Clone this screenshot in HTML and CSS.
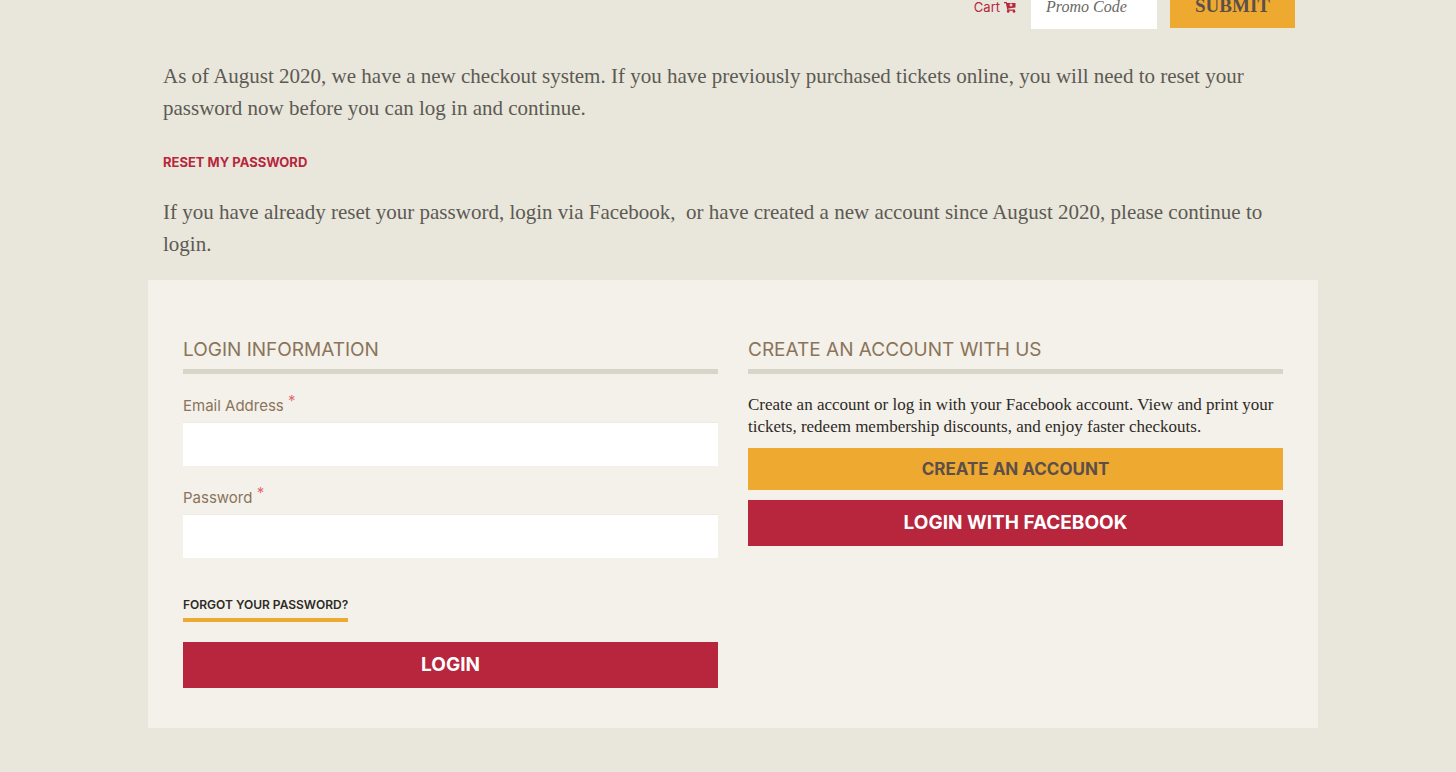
FILE: index.html
```html
<!DOCTYPE html>
<html lang="en">
<head>
<meta charset="utf-8">
<title>Login</title>
<link rel="stylesheet" href="styles.css">
</head>
<body>
<div class="container">
  <header class="toolbar">
    <a class="cart" href="#">Cart
      <svg class="cart-icon" viewBox="0 0 12 12" aria-hidden="true">
        <path d="M0 1h2.700l.3 1H11.500v4.600L4.300 7.500l.2 1H11v1.200H3.500L1.900 2.200H0z" fill="currentColor"/>
        <circle cx="4.200" cy="10.400" r="1.300" fill="currentColor"/>
        <circle cx="10" cy="10.400" r="1.300" fill="currentColor"/>
        <path d="M7 2.500v3M5.500 4h3" stroke="#fff" stroke-width="1"/>
      </svg>
    </a>
    <form class="promo">
      <input class="promo-input" type="text" placeholder="Promo Code" aria-label="Promo Code">
      <button class="promo-submit" type="button">SUBMIT</button>
    </form>
  </header>
  <section class="notice">
    <p class="notice-text">As of August 2020, we have a new checkout system. If you have previously purchased tickets online, you will need to reset your password now before you can log in and continue.</p>
    <a class="reset-link" href="#">RESET MY PASSWORD</a>
    <p class="notice-text">If you have already reset your password, login via Facebook,&nbsp; or have created a new account since August 2020, please continue to login.</p>
  </section>
  <main class="panel">
    <form class="column">
      <h2 class="heading">LOGIN INFORMATION</h2>
      <div class="field">
        <label class="label" for="email">Email Address <span class="required">*</span></label>
        <input class="input" id="email" type="email">
      </div>
      <div class="field">
        <label class="label" for="password">Password <span class="required">*</span></label>
        <input class="input" id="password" type="password">
      </div>
      <a class="forgot" href="#">FORGOT YOUR PASSWORD?</a>
      <button class="button primary" type="button">LOGIN</button>
    </form>
    <section class="column">
      <h2 class="heading">CREATE AN ACCOUNT WITH US</h2>
      <p class="intro">Create an account or log in with your Facebook account. View and print your tickets, redeem membership discounts, and enjoy faster checkouts.</p>
      <button class="button secondary" type="button">CREATE AN ACCOUNT</button>
      <button class="button primary" type="button">LOGIN WITH FACEBOOK</button>
    </section>
  </main>
</div>
</body>
</html>
```
FILE: styles.css
```css
* { box-sizing: border-box; }
body {
  margin: 0;
  padding: 0 0 44px 10px;
  background: #e9e6db;
  color: #2d2a26;
  font-family: Inter, "Liberation Sans", sans-serif;
}
.container { max-width: 1170px; margin: 0 auto; }
.toolbar {
  display: flex;
  justify-content: flex-end;
  align-items: center;
  gap: 15px;
  margin-top: -16px;
  padding-right: 23px;
}
.cart {
  display: flex;
  align-items: center;
  gap: 4px;
  color: #b7263c;
  font-size: 13px;
  text-decoration: none;
}
.cart-icon { width: 12px; height: 12px; }
.promo { display: flex; align-items: flex-start; gap: 13px; }
.promo-input {
  width: 126px;
  height: 45px;
  padding: 0 15px;
  border: 0;
  background: #fff;
  font: italic 16px "Liberation Serif", serif;
}
.promo-input::placeholder { color: #6b6863; opacity: 1; }
.promo-submit {
  width: 125px;
  height: 44px;
  padding: 0;
  border: 0;
  background: #eea930;
  color: #5c4f49;
  font: bold 19px "Liberation Serif", serif;
}
.notice { padding: 31px 15px 20px; }
.notice-text {
  margin: 0;
  color: #5c5a54;
  font: 21px/32px "Liberation Serif", serif;
}
.reset-link {
  display: inline-block;
  margin: 28px 0 24px;
  color: #b7263c;
  font-size: 13px;
  line-height: 20px;
  font-weight: 700;
  text-decoration: none;
}
.panel {
  display: grid;
  grid-template-columns: 1fr 1fr;
  gap: 30px;
  padding: 55px 35px 40px;
  background: #f4f1ea;
}
.column { display: flex; flex-direction: column; }
.heading {
  margin: 0 0 20px;
  padding-bottom: 4px;
  border-bottom: 5px solid #d9d4c8;
  color: #8a745a;
  font-size: 19px;
  line-height: 30px;
  font-weight: 400;
}
.field { margin-bottom: 20px; }
.label {
  display: block;
  margin-bottom: 4px;
  color: #8a745a;
  font-size: 15px;
  line-height: 24px;
}
.required {
  color: #e06a70;
  font-size: 15px;
  line-height: 0;
  vertical-align: 5px;
}
.input {
  display: block;
  width: 100%;
  height: 44px;
  padding: 0 12px;
  border: 0;
  border-top: 1px solid #eeebe5;
  background: #fff;
  font-size: 16px;
}
.forgot {
  align-self: flex-start;
  margin: 17px 0 20px;
  padding-bottom: 3px;
  border-bottom: 4px solid #eea930;
  color: #2d2a26;
  font-size: 12px;
  line-height: 20px;
  font-weight: 600;
  text-decoration: none;
}
.intro {
  margin: 0 0 10px;
  font: 17px/22px "Liberation Serif", serif;
}
.button {
  border: 0;
  padding: 0;
  font-family: inherit;
  font-weight: 700;
}
.primary {
  background: #b7263c;
  color: #fff;
  font-size: 19px;
  line-height: 46px;
}
.secondary {
  margin-bottom: 10px;
  background: #eea930;
  color: #5c4f49;
  font-size: 17px;
  line-height: 42px;
}
```
